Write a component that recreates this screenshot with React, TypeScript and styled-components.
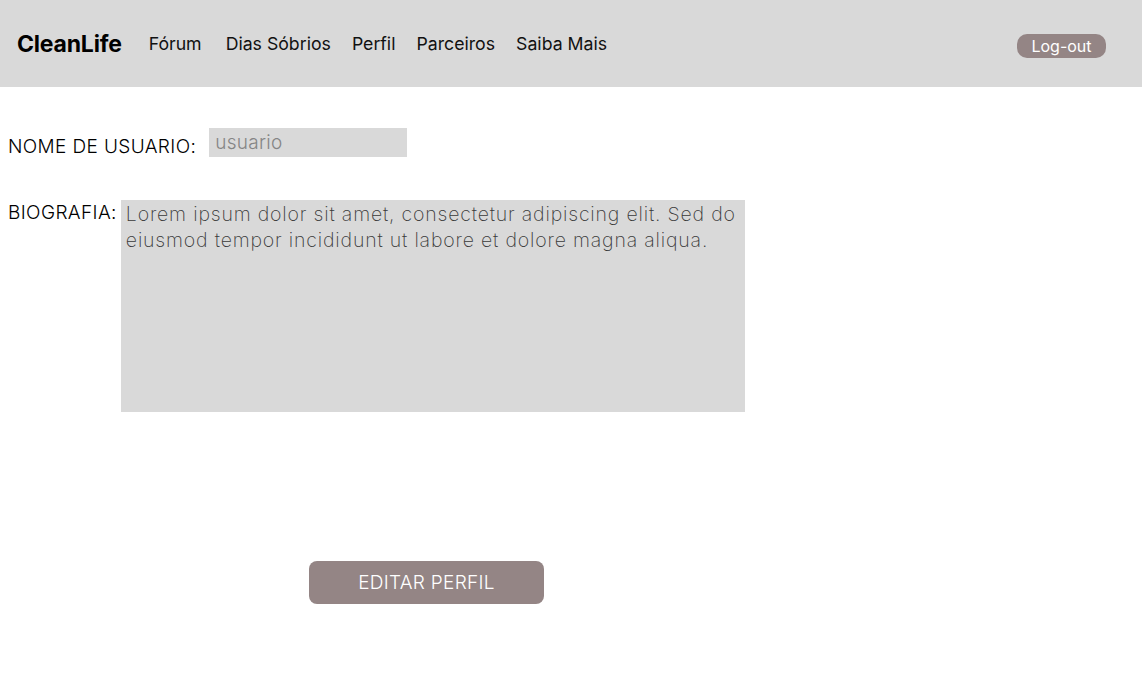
import styled, { createGlobalStyle } from 'styled-components'

const GlobalStyle = createGlobalStyle`
    body {
        margin: 0;
        background: #ffffff;
        font-family: Inter, "Liberation Sans", sans-serif;
        color: #000;
    }
`

const Header = styled.header`
    height: 87px;
    background: #d9d9d9;
    display: flex;
    align-items: center;
    padding: 0 36px 0 17px;
`

const Logo = styled.span`
    font-size: 23px;
    font-weight: 700;
    letter-spacing: -0.2px;
    margin-right: 27px;
`

const Nav = styled.nav`
    display: flex;
    gap: 21px;
    flex: 1;
`

const NavLink = styled.a`
    font-size: 17.7px;
    color: #111;
    text-decoration: none;
    cursor: pointer;

    &:first-child {
        margin-right: 3px;
    }
`

const LogoutButton = styled.button`
    background: #948585;
    color: #fff;
    border: none;
    border-radius: 10px;
    height: 24px;
    width: 89px;
    margin-top: 4px;
    font-family: inherit;
    font-size: 16px;
    padding: 0;
    cursor: pointer;
`

const Main = styled.main`
    padding: 41px 0 0 8px;
    display: flex;
    flex-direction: column;
`

const Row = styled.div<{ $gap: number; $top?: number }>`
    display: flex;
    align-items: flex-start;
    gap: ${props => props.$gap}px;
    margin-top: ${props => props.$top ?? 0}px;
`

const Label = styled.label<{ $offset?: number }>`
    font-size: 19px;
    font-weight: 300;
    letter-spacing: 0.38px;
    padding-top: ${props => props.$offset ?? 0}px;
    white-space: nowrap;
`

const TextInput = styled.input`
    width: 198px;
    height: 29px;
    box-sizing: border-box;
    background: #d9d9d9;
    border: none;
    outline: none;
    padding: 0 6px;
    font-family: inherit;
    font-size: 19px;
    font-weight: 300;
    letter-spacing: 0.3px;
    color: #333;

    &::placeholder {
        color: #858585;
    }
`

const TextArea = styled.textarea`
    width: 624px;
    height: 212px;
    box-sizing: border-box;
    background: #d9d9d9;
    border: none;
    outline: none;
    resize: none;
    padding: 1px 5px;
    font-family: inherit;
    font-size: 19.5px;
    font-weight: 200;
    letter-spacing: 0.82px;
    line-height: 26px;
    color: #3a3a3a;
`

const EditButton = styled.button`
    margin: 149px 0 0 301px;
    width: 235px;
    height: 43px;
    background: #948585;
    color: #fff;
    border: none;
    border-radius: 8px;
    font-family: inherit;
    font-size: 19px;
    font-weight: 300;
    letter-spacing: 0.3px;
    cursor: pointer;
`

export default function App() {
    const links = ['Fórum', 'Dias Sóbrios', 'Perfil', 'Parceiros', 'Saiba Mais']

    return (
        <>
            <GlobalStyle />
            <Header>
                <Logo>CleanLife</Logo>
                <Nav>
                    {links.map(link => <NavLink key={link}>{link}</NavLink>)}
                </Nav>
                <LogoutButton>Log-out</LogoutButton>
            </Header>
            <Main>
                <Row $gap={13}>
                    <Label $offset={7}>NOME DE USUARIO:</Label>
                    <TextInput placeholder="usuario" />
                </Row>
                <Row $gap={4} $top={42}>
                    <Label $offset={1}>BIOGRAFIA:</Label>
                    <TextArea defaultValue="Lorem ipsum dolor sit amet, consectetur adipiscing elit. Sed do eiusmod tempor incididunt ut labore et dolore magna aliqua." />
                </Row>
                <div>
                    <EditButton>EDITAR PERFIL</EditButton>
                </div>
            </Main>
        </>
    )
}
